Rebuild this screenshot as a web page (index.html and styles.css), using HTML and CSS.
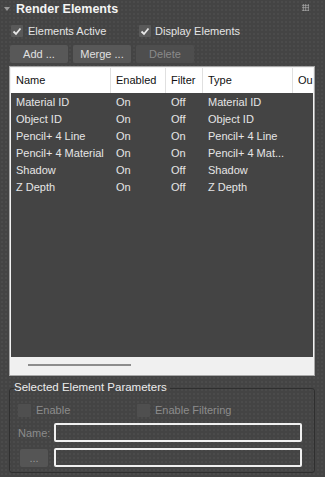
FILE: index.html
```html
<!DOCTYPE html>
<html>
<head>
<meta charset="utf-8">
<link rel="stylesheet" href="styles.css">
</head>
<body>
<div class="panel">
  <div class="rollout-head">
    <span class="tri"></span>
    <span class="title">Render Elements</span>
    <span class="grip"></span>
  </div>
  <div class="checks">
    <label class="chk"><span class="box on"><svg width="10" height="9" viewBox="0 0 10 9"><path d="M1.5 4.5 L4 7 L8.5 1.5" fill="none" stroke="#e8e8e8" stroke-width="1.8"/></svg></span>Elements Active</label>
    <label class="chk"><span class="box on"><svg width="10" height="9" viewBox="0 0 10 9"><path d="M1.5 4.5 L4 7 L8.5 1.5" fill="none" stroke="#e8e8e8" stroke-width="1.8"/></svg></span>Display Elements</label>
  </div>
  <div class="buttons">
    <span class="btn">Add ...</span>
    <span class="btn">Merge ...</span>
    <span class="btn disabled">Delete</span>
  </div>
  <div class="list">
    <div class="row head">
      <span class="c1">Name</span><span class="c2">Enabled</span><span class="c3">Filter</span><span class="c4">Type</span><span class="c5">Ou</span>
    </div>
    <div class="body">
      <div class="row"><span class="c1">Material ID</span><span class="c2">On</span><span class="c3">Off</span><span class="c4">Material ID</span></div>
      <div class="row"><span class="c1">Object ID</span><span class="c2">On</span><span class="c3">Off</span><span class="c4">Object ID</span></div>
      <div class="row"><span class="c1">Pencil+ 4 Line</span><span class="c2">On</span><span class="c3">On</span><span class="c4">Pencil+ 4 Line</span></div>
      <div class="row"><span class="c1">Pencil+ 4 Material</span><span class="c2">On</span><span class="c3">On</span><span class="c4">Pencil+ 4 Mat...</span></div>
      <div class="row"><span class="c1">Shadow</span><span class="c2">On</span><span class="c3">Off</span><span class="c4">Shadow</span></div>
      <div class="row"><span class="c1">Z Depth</span><span class="c2">On</span><span class="c3">Off</span><span class="c4">Z Depth</span></div>
    </div>
    <div class="hscroll"><span class="thumb"></span></div>
  </div>
  <div class="group">
    <span class="legend">Selected Element Parameters</span>
    <div class="gchecks">
      <label class="chk dis"><span class="box"></span>Enable</label>
      <label class="chk dis"><span class="box"></span>Enable Filtering</label>
    </div>
    <div class="field">
      <span class="lbl">Name:</span>
      <span class="input"></span>
    </div>
    <div class="field">
      <span class="btn small">...</span>
      <span class="input"></span>
    </div>
  </div>
</div>
</body>
</html>
```
FILE: styles.css
```css
* { box-sizing: border-box; }
html, body { margin: 0; padding: 0; }
body {
  width: 325px;
  height: 477px;
  overflow: hidden;
  background-color: #444444;
  background-image: radial-gradient(circle, #4b4b4b 0.8px, transparent 1px);
  background-size: 4px 4px;
  font-family: "Liberation Sans", Arial, sans-serif;
  font-size: 11px;
  color: #e2e2e2;
}
.panel { padding: 0 9px 0 9px; }
.rollout-head {
  height: 20px;
  display: flex;
  align-items: center;
  position: relative;
  margin-left: -9px;
  padding-left: 4px;
}
.tri {
  width: 0; height: 0;
  border-left: 3.5px solid transparent;
  border-right: 3.5px solid transparent;
  border-top: 4px solid #9a9a9a;
  margin-right: 6px;
  margin-top: -2px;
}
.title {
  font-weight: bold;
  font-size: 12.5px;
  color: #f4f4f4;
  margin-top: -3px;
}
.grip {
  position: absolute;
  right: 7px;
  top: 4px;
  width: 7px;
  height: 7px;
  background-image: radial-gradient(circle, #aaaaaa 0.8px, transparent 1px);
  background-size: 2.5px 2.5px;
}
.checks, .gchecks {
  display: grid;
  grid-template-columns: 126px 1fr;
  height: 22px;
  align-items: center;
  padding-left: 2px;
}
.chk { display: flex; align-items: center; gap: 5px; color: #e4e4e4; }
.box {
  width: 12px; height: 12px;
  background: #595959;
  border-radius: 1px;
  display: flex; align-items: center; justify-content: center;
}
.checks .chk:nth-child(2) { margin-left: 2px; gap: 4px; }
.buttons {
  display: flex;
  gap: 5px;
  padding: 3px 0 0 1px;
  height: 25px;
}
.btn {
  width: 58px;
  height: 18px;
  background: #585858;
  border-radius: 2px;
  display: flex; align-items: center; justify-content: center;
  color: #e0e0e0;
}
.btn.disabled { color: #8a8a8a; background: #4e4e4e; }
.list {
  margin-top: -1px;
  width: 306px;
  height: 310px;
  border: 1px solid #a8a8a8;
  box-shadow: inset 0 0 0 1px #f2f2f2;
  padding: 1px;
  display: flex;
  flex-direction: column;
  overflow: hidden;
  background: #444;
}
.row {
  display: grid;
  grid-template-columns: 100px 55px 37px 90px 30px;
  height: 17px;
  align-items: center;
  white-space: nowrap;
}
.row span { padding-left: 5px; overflow: hidden; }
.row.head {
  height: 25px;
  background: #ffffff;
  color: #111;
  flex: none;
}
.row.head span {
  height: 25px;
  line-height: 25px;
  border-right: 1px solid #e0e0e0;
}
.row.head .c5 { border-right: none; }
.body { flex: 1; color: #e6e6e6; background: #444; }
.hscroll {
  height: 17px;
  background: #f0f0f0;
  flex: none;
  position: relative;
}
.thumb {
  position: absolute;
  left: 17px;
  top: 7px;
  width: 103px;
  height: 2px;
  background: #8c8c8c;
}
.group {
  position: relative;
  margin-top: 12px;
  width: 306px;
  height: 85px;
  border: 1px solid #2f2f2f;
  border-radius: 3px;
  padding: 11px 0 0 8px;
}
.legend {
  position: absolute;
  left: 4px;
  top: -8px;
  padding: 0 3px 0 0;
  background: #444;
  color: #ececec;
  font-size: 11.5px;
}
.gchecks { height: 20px; padding-left: 0; grid-template-columns: 119px 1fr; }
.chk.dis { color: #8c8c8c; }
.chk.dis .box { background: #4f4f4f; width: 13px; height: 13px; }
.field {
  display: flex;
  align-items: center;
  height: 25px;
  gap: 8px;
}
.lbl { color: #8c8c8c; width: 28px; }
.input {
  width: 248px;
  height: 19px;
  border: 2px solid #f0f0f0;
  border-radius: 2px;
}
.btn.small {
  width: 28px;
  height: 18px;
  margin-left: 2px;
  margin-right: -2px;
  background: #555;
  color: #999;
}
```
